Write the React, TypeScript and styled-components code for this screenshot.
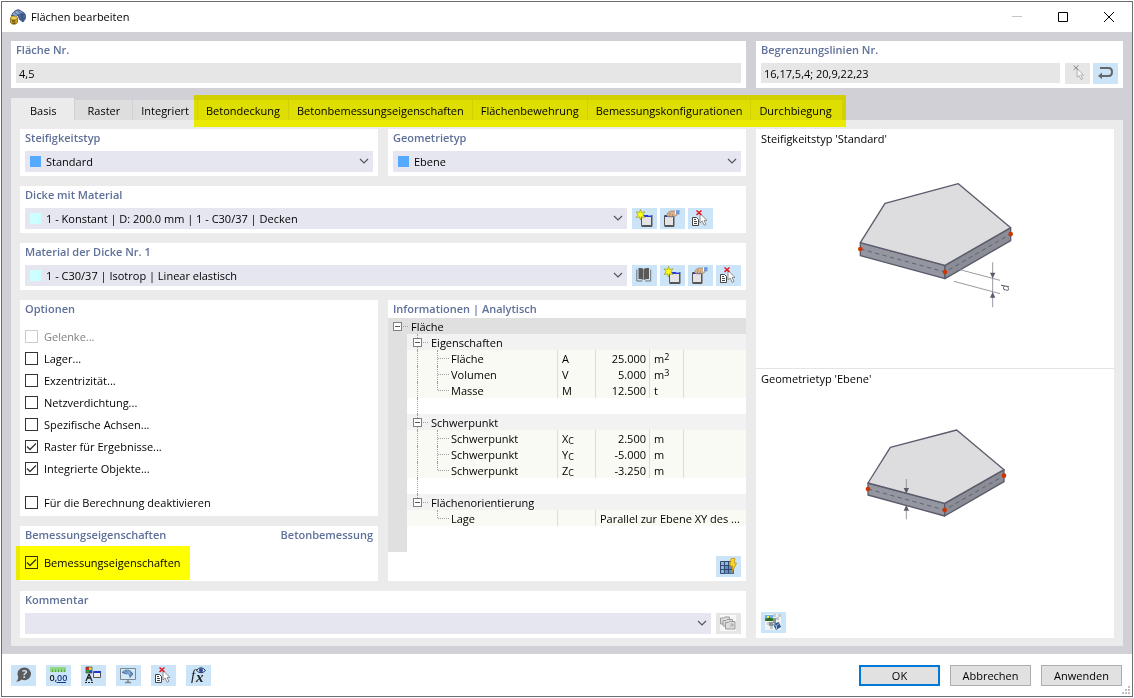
import React, { useState } from 'react';
import styled, { createGlobalStyle, css } from 'styled-components';

const GlobalStyle = createGlobalStyle`
  *, *::before, *::after { box-sizing: border-box; }
  body {
    margin: 0;
    background: #fff;
    color: #000;
    font-family: 'Open Sans', 'Noto Sans', sans-serif;
    font-size: 11px;
    line-height: 16px;
  }
  button, input, select { font: inherit; color: inherit; margin: 0; }
  svg { display: block; flex: none; }
`;

/* ---------- window frame ---------- */

const Page = styled.div`
  display: flex;
  min-height: 100vh;
  padding: 1px;
`;

const Window = styled.main`
  position: relative;
  display: flex;
  flex-direction: column;
  flex: 1;
  min-width: 0;
  border: 1px solid #6c6d70;
  background: #fff;
`;

const TitleBar = styled.header`
  display: flex;
  align-items: center;
  height: 30px;
  padding-left: 8px;
`;

const WindowTitle = styled.h1`
  flex: 1;
  margin: 0 0 0 5px;
  font-size: 11px;
  font-weight: 400;
`;

const CaptionButton = styled.button`
  display: grid;
  place-items: center;
  width: 46px;
  height: 30px;
  padding: 0;
  border: 0;
  background: none;
`;

const Body = styled.div`
  display: flex;
  flex-direction: column;
  flex: 1;
  padding: 9px 9px 8px;
  background: #d1d0d6;
`;

const Header = styled.div`
  display: grid;
  grid-template-columns: minmax(0, 1fr) 367px;
  gap: 10px;
  margin-bottom: 10px;
`;

/* ---------- tabs ---------- */

const TabBar = styled.div`
  display: flex;
  align-items: flex-end;
  height: 22px;
`;

const HighlightedTabs = styled.div`
  position: relative;
  display: flex;
  &::after {
    content: '';
    position: absolute;
    inset: -5px -4px -7px -3px;
    background: #ff0;
    mix-blend-mode: multiply;
    pointer-events: none;
  }
`;

const Tab = styled.button<{ $active?: boolean }>`
  height: 20px;
  padding: 1px 8px 0;
  border: 0;
  border-left: 1px solid #d1d0d6;
  background: #dedede;
  white-space: nowrap;
  line-height: 20px;
  &:last-child { padding-right: 10px; }
  ${p => p.$active && css`
    height: 22px;
    padding: 3px 18px 0;
    background: #ebebeb;
    border-color: #ebebeb;
  `}
`;

const WideTab = styled(Tab)`
  padding: 1px 12px 0;
`;

const TabPage = styled.div`
  display: grid;
  grid-template-columns: minmax(0, 1fr) 358px;
  gap: 10px;
  flex: 1;
  padding: 9px 9px 8px;
  background: #ebebeb;
`;

/* ---------- panels ---------- */

const Column = styled.div`
  display: flex;
  flex-direction: column;
  gap: 10px;
  min-width: 0;
`;

const Split = styled.div<{ $grow?: boolean }>`
  display: grid;
  grid-template-columns: minmax(0, 1fr) minmax(0, 1fr);
  gap: 10px;
  flex: ${p => (p.$grow ? 1 : 'none')};
`;

const Panel = styled.section<{ $grow?: boolean }>`
  display: flex;
  flex-direction: column;
  flex: ${p => (p.$grow ? 1 : 'none')};
  min-width: 0;
  padding: 0 5px 4px;
  background: #fff;
`;

const OptionPanel = styled(Panel)`
  min-height: 55px;
  padding-bottom: 2px;
`;

const PanelTitle = styled.h2`
  display: flex;
  justify-content: space-between;
  height: 22px;
  margin: 0;
  padding-top: 1px;
  color: #5f7099;
  font-size: 11px;
  font-weight: 600;
`;

const FieldRow = styled.div`
  display: flex;
  gap: 5px;
`;

const TextField = styled.input`
  flex: 1;
  min-width: 0;
  height: 20px;
  padding: 0 3px;
  border: 0;
  background: #e6e6e6;
`;

const Buttons = styled.div<{ $slots?: number }>`
  display: flex;
  gap: 3px;
  ${p => p.$slots && css`width: ${p.$slots * 28 - 3}px;`}
`;

const IconButton = styled.button`
  width: 25px;
  height: 21px;
  padding: 0;
  border: 0;
  background: #cce4f7;
  &:disabled { background: #e6e6e6; }
`;

/* ---------- drop-down ---------- */

const SelectBox = styled.div`
  position: relative;
  flex: 1;
  min-width: 0;
`;

const NativeSelect = styled.select`
  display: block;
  appearance: none;
  width: 100%;
  height: 21px;
  padding: 1px 24px 0 21px;
  border: 0;
  border-radius: 0;
  background: #e6e6f1;
`;

const Swatch = styled.span<{ $color: string }>`
  position: absolute;
  left: 5px;
  top: 5px;
  width: 11px;
  height: 11px;
  background: ${p => p.$color};
  pointer-events: none;
`;

const ChevronSlot = styled.span`
  position: absolute;
  right: 4px;
  top: 7px;
  pointer-events: none;
`;

/* ---------- options ---------- */

const OptionList = styled.div`
  display: flex;
  flex-direction: column;
  align-items: flex-start;
  padding-top: 4px;
`;

const Spacer = styled.div`
  height: 12px;
`;

const Option = styled.label<{ $marked?: boolean; $disabled?: boolean }>`
  position: relative;
  display: flex;
  align-items: center;
  gap: 6px;
  height: 22px;
  color: ${p => (p.$disabled ? '#808080' : '#000')};
  ${p => p.$marked && css`
    &::after {
      content: '';
      position: absolute;
      inset: -6px -9px;
      background: #ff0;
      mix-blend-mode: multiply;
      pointer-events: none;
    }
  `}
`;

const CheckFrame = styled.span`
  position: relative;
  width: 13px;
  height: 13px;
  margin-bottom: 1px;
  svg { position: absolute; left: 0; top: 0; pointer-events: none; }
`;

const Check = styled.input`
  display: block;
  appearance: none;
  width: 13px;
  height: 13px;
  border: 1px solid #333;
  background: #fff;
  &:disabled { border-color: #ccc; }
`;

/* ---------- information tree ---------- */

const InfoPanel = styled(Panel)`
  padding: 0;
`;

const InfoTitle = styled(PanelTitle)`
  height: 18px;
  padding-left: 5px;
`;

const InfoFooter = styled.div`
  display: flex;
  flex: 1;
  align-items: flex-end;
  justify-content: flex-end;
  padding: 4px 5px;
`;

const Tree = styled.table`
  width: 100%;
  table-layout: fixed;
  border-spacing: 0;
  td { height: 16px; padding: 0; line-height: 16px; white-space: nowrap; }
`;

const Gutter = styled.td`
  background: #e0e0e0;
`;

const Rest = styled.td`
  && { height: 26px; }
`;

const RootCell = styled.td`
  background: #e0e0e0;
`;

const GroupCell = styled.td`
  background: #f2f2f2;
`;

const RootLabel = styled.div`
  display: flex;
  align-items: flex-start;
  height: 16px;
  padding-left: 5px;
  line-height: 18px;
`;

const NodeLabel = styled(RootLabel)<{ $last?: boolean }>`
  position: relative;
  padding-left: 6px;
  &::before {
    content: '';
    position: absolute;
    left: 10px;
    top: 0;
    height: ${p => (p.$last ? 4 : 16)}px;
    border-left: 1px dotted #a0a0a0;
  }
`;

const Dash = styled.span`
  width: 5px;
  margin: 8px 3px 0 1px;
  border-top: 1px dotted #a0a0a0;
`;

const Toggle = styled.button`
  position: relative;
  && { margin-top: 4px; }
  width: 9px;
  height: 9px;
  padding: 0;
  border: 1px solid #808080;
  background: #fff;
  &::after {
    content: '';
    position: absolute;
    left: 1px;
    right: 1px;
    top: 3px;
    border-top: 1px solid #555;
  }
`;

const SpacerCell = styled.td`
  div {
    height: 16px;
    margin-left: 10px;
    border-left: 1px dotted #a0a0a0;
  }
`;

const LeafCell = styled.td`
  background: #f9faf4;
`;

const LeafLabel = styled.div<{ $end?: boolean; $trunk?: boolean }>`
  position: relative;
  height: 16px;
  margin-left: 10px;
  padding-left: 33px;
  border-left: 1px dotted ${p => (p.$trunk ? '#a0a0a0' : 'transparent')};
  line-height: 18px;
  &::before {
    content: '';
    position: absolute;
    left: 19px;
    top: 0;
    height: ${p => (p.$end ? 8 : 16)}px;
    border-left: 1px dotted #a0a0a0;
  }
  &::after {
    content: '';
    position: absolute;
    left: 20px;
    top: 8px;
    width: 11px;
    border-top: 1px dotted #a0a0a0;
  }
`;

const DataCell = styled.td<{ $right?: boolean }>`
  && { padding: 0 3px 0 4px; }
  border-left: 1px solid #dcdcdc;
  background: #f9faf4;
  text-align: ${p => (p.$right ? 'right' : 'left')};
`;

const Value = styled.div`
  height: 16px;
  line-height: 18px;
  sub, sup { font-size: 9px; line-height: 0; }
  sub { vertical-align: -1px; }
  sup { vertical-align: 3px; }
`;

/* ---------- preview ---------- */

const Preview = styled.aside`
  display: flex;
  flex-direction: column;
  min-width: 0;
  background: #fff;
`;

const PreviewPart = styled.figure<{ $grow?: boolean }>`
  display: flex;
  flex-direction: column;
  flex: ${p => (p.$grow ? 1 : 'none')};
  align-items: center;
  gap: ${p => (p.$grow ? 13 : 23)}px;
  min-height: 240px;
  margin: 0;
  padding: 2px 5px 5px;
  border-bottom: ${p => (p.$grow ? 0 : 1)}px solid #e4e4e8;
`;

const Caption = styled.figcaption`
  align-self: stretch;
`;

const PreviewTool = styled.div`
  display: flex;
  flex: 1;
  align-items: flex-end;
  align-self: stretch;
`;

/* ---------- footer ---------- */

const Footer = styled.footer`
  display: flex;
  align-items: center;
  justify-content: space-between;
  height: 42px;
  padding: 0 10px 0 9px;
`;

const FooterGroup = styled.div`
  display: flex;
  gap: 10px;
`;

const PushButton = styled.button<{ $primary?: boolean }>`
  width: 81px;
  height: 21px;
  padding: 1px 0 0;
  border: ${p => (p.$primary ? '2px solid #0078d7' : '1px solid #adadad')};
  background: #e1e1e1;
  line-height: 16px;
`;

const Grip = styled.span`
  position: absolute;
  right: 1px;
  bottom: 1px;
`;

/* ---------- drawings ---------- */

const Icon = ({ children }: { children: React.ReactNode }) => (
  <svg width="25" height="21" viewBox="0 0 25 21" aria-hidden="true">{children}</svg>
);

const Chevron = () => (
  <svg width="10" height="7" viewBox="0 0 10 7" aria-hidden="true">
    <path d="M1 1l4 4 4-4" fill="none" stroke="#555" strokeWidth="1.2" />
  </svg>
);

const AppIcon = () => (
  <svg width="16" height="16" viewBox="0 0 16 16" aria-hidden="true">
    <path d="M1.500 7C2.500 3.500 5 .8 9 .8l5 3c1.800 1.500 1.800 4 1.200 6.200L13 13l-3.500-2.500L8 6.500z" fill="#4c6c9e" stroke="#33496f" strokeWidth=".8" />
    <path d="M2.500 5.500C4 2.500 6.500 1.300 9.200 1.500L13 4C10 4 7.500 5 6.500 7.500z" fill="#8ba8cf" />
    <path d="M4.500 3.500l5 3.500M7.500 1.500L12 5.500M10 8l4-2.500M10.500 10.500l4.500-2M12 4.500l1 8" stroke="#2e4772" strokeWidth=".7" />
    <path d="M.5 9v4c0 3 7 3 7 0V9z" fill="#d2a41e" stroke="#75590d" strokeWidth=".7" />
    <ellipse cx="4" cy="9" rx="3.500" ry="2" fill="#f0d050" stroke="#8c6d12" strokeWidth=".7" />
    <path d="M5.500 11.500h-3v1.500h2.500v1.500H2.500" fill="none" stroke="#5d480c" strokeWidth=".8" />
  </svg>
);

const NewIcon = () => (
  <Icon>
    <path d="M9.500 7.500h10v10h-10z" fill="#e4e4e4" stroke="#555" />
    <path d="M20 7v11.500H9.500" fill="none" stroke="#555" />
    <path d="M10 7h9v2h-9z" fill="#2438e0" />
    <path d="M16 7.500h3" stroke="#8b98ff" />
    <path d="M8.500 1.500l1 3 3.500-.7L10.800 6.500 13 9.500l-3.500-.7-1 3.200-1-3.200L4 9.500l2.200-3L4 3.800l3.500.7z" fill="#ffff14" stroke="#8a8a20" strokeWidth=".6" />
  </Icon>
);

const EditIcon = () => (
  <Icon>
    <path d="M4.500 7.500h9v10h-9z" fill="#e4e4e4" stroke="#555" />
    <path d="M14 7v11.500H4.500" fill="none" stroke="#555" />
    <path d="M5 7h8v2H5z" fill="#2438e0" />
    <path d="M6.500 7.500L8 4.500 11 3h4l2 1v3l-3 2-1.500-1L11 9.500 10 8 8.500 9z" fill="#dcb48c" stroke="#8d6e52" strokeWidth=".6" />
    <path d="M9 8l1.500-3M11.500 8.500L13 6" stroke="#8d6e52" strokeWidth=".6" />
    <path d="M15.500 2.500L19.500 2v4.500L16 6z" fill="#6c98da" />
    <path d="M15.500 2.500V6.500" stroke="#fff" />
  </Icon>
);

const DeleteIcon = () => (
  <Icon>
    <path d="M4.500 9.500h4l2 2v6h-6z" fill="#fff" stroke="#454545" />
    <path d="M6 11.500h2M6 13.500h3M6 15.500h3" stroke="#454545" />
    <path d="M12 5.500v9.500l2.200-2 2 4.300 1.800-.9-2-4h3z" fill="#fff" stroke="#777" strokeWidth=".8" />
    <path d="M8.500 2.500l5 4.500m0-4.500l-5 4.500" stroke="#e8141c" strokeWidth="1.500" />
  </Icon>
);

const PickIcon = () => (
  <Icon>
    <path d="M12 5.500v8.700l2-1.700 2 4 1.700-.8-1.900-3.700h2.700z" fill="#f6f6f6" stroke="#aaa" strokeWidth=".9" />
    <path d="M8.500 2.500l5 4.500m0-4.500l-5 4.500" stroke="#888" />
  </Icon>
);

const ReturnIcon = () => (
  <Icon>
    <path d="M7 5h8.500c2.300 0 3.500 1.500 3.500 4s-1.200 4-3.500 4H8" fill="none" stroke="#666" strokeWidth="2" />
    <path d="M5 13l4-3.500v6.500z" fill="#666" />
  </Icon>
);

const BookIcon = () => (
  <Icon>
    <path d="M6.500 3C9 2.800 10.500 3.200 11.500 4v11c-1-.8-2.500-1-5-1zM17 3c-2.500-.2-4 .2-5 1v11c1-.8 2.500-1 5-1z" fill="#595959" />
    <path d="M4.800 4.500V16h5.500M18.700 4.500V16h-5.500" fill="none" stroke="#707070" />
  </Icon>
);

const MeshIcon = () => (
  <Icon>
    <path d="M4.500 5.500h13V17.500h-13z" fill="#8fb7df" stroke="#33496f" />
    <path d="M9 10h8.500v7.500H9z" fill="#5f8dc3" />
    <path d="M8.500 5.500v12M12.500 5.500v12M4.500 9.500h13M4.500 13.500h13" stroke="#33496f" />
    <path d="M15 2.500h4l-1 4.500h2.500l-4.500 9.500.8-6.500H14z" fill="#fad72e" stroke="#c79208" strokeWidth=".8" />
  </Icon>
);

const CopyIcon = () => (
  <Icon>
    <path d="M4 2h16v16H4z" fill="#f8f8f8" />
    <g fill="#ddd" stroke="#9b9b9b">
      <path d="M4.500 5h3l1-1h5v7h-9z" />
      <path d="M7 7.500h3l1-1h5.500V13H7z" />
      <path d="M9.500 9.500h3l1-1H19V16H9.500z" />
    </g>
    <path d="M14 14l3-3h-2.500m2.500 0v2.500" fill="none" stroke="#999" strokeWidth=".8" />
  </Icon>
);

const RenderIcon = () => (
  <Icon>
    <path d="M4 2h16v16H4z" fill="#f1f3f3" />
    <path d="M12 2h3v3h-3zM15 5h3v3h-3zM6 10h3v3H6zM9 14h3v3H9zM17 2h3v3h-3z" fill="#c4cccc" />
    <path d="M4 3h8v6H4z" fill="#3f8e30" />
    <path d="M4 3h8v3H4z" fill="#68b0e6" />
    <path d="M5 8l3-3 4 3v1H4z" fill="#28651f" />
    <path d="M6 4h2v2H6z" fill="#ffe043" />
    <path d="M12 6h3v5h-3zM8 10h4v4H8z" fill="#8c9296" />
    <path d="M12 12l6-2 2 5-5 3z" fill="#31588d" />
    <path d="M12.500 12.500l3 1 3.500-2.500M15.500 14v3" fill="none" stroke="#a3c4ea" />
  </Icon>
);

const HelpIcon = () => (
  <Icon>
    <path d="M13.500 2.500a6.500 6.300 0 1 1-2.800 12C9 16 7 16.700 5 16.700c1.500-1.200 2.300-3 2.200-5A6.400 6.400 0 0 1 13.500 2.500z" fill="#5c5c5c" />
    <text x="13.500" y="13" fill="#cce4f7" fontSize="11" fontWeight="700" textAnchor="middle">?</text>
  </Icon>
);

const UnitsIcon = () => (
  <Icon>
    <path d="M4 2h16v5H4z" fill="#92d884" />
    <path d="M6.500 4.500V7M9.500 4.500V7M12.500 4.500V7M15.500 4.500V7M18.500 4.500V7" stroke="#4e9c42" strokeWidth=".8" />
    <text x="3.500" y="16" fontSize="9" fontWeight="600" fill="#111">0,<tspan fill="#123a86">00</tspan></text>
    <path d="M10.500 17.500H20" stroke="#123a86" />
  </Icon>
);

const DisplayIcon = () => (
  <Icon>
    <path d="M5 2h3v3H5z" fill="#ed1c24" />
    <path d="M8 2h3v3H8z" fill="#efe51b" />
    <path d="M5 5h3v3H5z" fill="#27a83b" />
    <path d="M8 5h3v3H8z" fill="#2651d8" />
    <path d="M5 2h6v6H5z" fill="none" stroke="#454545" strokeWidth=".7" />
    <path d="M8 9l-3 7M8 9l3 7M6 13h4" fill="none" stroke="#222" strokeWidth="1.300" />
    <path d="M4 17.500h2M7 17.500h2M10 17.500h2" stroke="#222" />
    <path d="M12.500 6.500h7v6h-7z" fill="#ececec" stroke="#555" />
    <path d="M13 6h7v2h-7z" fill="#2438c8" />
  </Icon>
);

const ScreenIcon = () => (
  <Icon>
    <path d="M4.500 3.500h15v11h-15z" fill="#d3e8f8" stroke="#7c8790" />
    <path d="M12 14.500V17M9 17.500h6" stroke="#7c8790" strokeWidth="1.500" />
    <path d="M6 7.500C9 4 14 4 17 9l-3 3.500C13.500 9.500 12 8 10.500 9z" fill="#5e88ba" stroke="#395a85" strokeWidth=".6" />
    <path d="M8 6l4 2.500M11 5l3.500 5M14 6l-1.500 4" stroke="#b2cdec" strokeWidth=".6" />
  </Icon>
);

const FormulaIcon = () => (
  <Icon>
    <text x="5" y="15" fontFamily="'Liberation Serif', serif" fontStyle="italic" fontSize="15" fill="#222">f</text>
    <text x="10" y="17" fontFamily="'Liberation Serif', serif" fontStyle="italic" fontWeight="700" fontSize="15" fill="#222">x</text>
    <path d="M10.500 5.500Q15 0 19.500 5.500 15 10 10.500 5.500z" fill="#dce7f5" stroke="#222f55" />
    <circle cx="15" cy="5.300" r="2" fill="#2b4f9c" />
  </Icon>
);

const Tip = ({ x, y, up }: { x: number; y: number; up?: boolean }) => (
  <path d={up ? `M${x} ${y}l8 17h-16z` : `M${x} ${y}l8-17h-16z`} fill="#5b5b6b" />
);

const StandardDrawing = () => (
  <svg width="190" height="150" viewBox="0 0 570 450" aria-hidden="true">
    <g stroke="#5b5b6b" strokeWidth="4" strokeLinejoin="round">
      <path d="M61 218L315 286V326L61 257z" fill="#9496a0" />
      <path d="M315 286L512 173V212L315 326z" fill="#8a8c96" />
      <path d="M61 218L135 100 355 41 512 173 315 286z" fill="#dddde0" />
    </g>
    <path d="M61 237L315 306 512 192" fill="none" stroke="#555866" strokeWidth="2.500" strokeDasharray="13 10" />
    <path d="M345 295L480 331M342 334L480 371M458 277V412" stroke="#85858f" strokeWidth="2.500" />
    <Tip x={458} y={325} />
    <Tip x={458} y={366} up />
    <g fill="#cf3400"><circle cx="61" cy="237" r="7" /><circle cx="315" cy="306" r="7" /><circle cx="512" cy="192" r="7" /></g>
    <text transform="translate(506 363) rotate(-90)" fontFamily="'Liberation Sans', sans-serif" fontStyle="italic" fontSize="32" fill="#5b5b6b">d</text>
  </svg>
);

const PlaneDrawing = () => (
  <svg width="190" height="130" viewBox="0 0 570 390" aria-hidden="true">
    <g stroke="#5b5b6b" strokeWidth="4" strokeLinejoin="round">
      <path d="M84 249L314 310V348L84 285z" fill="#9496a0" />
      <path d="M314 310L492 209V245L314 348z" fill="#8a8c96" />
      <path d="M84 249L151 142 350 90 492 209 314 310z" fill="#dddde0" />
    </g>
    <path d="M84 267L314 330 492 227" fill="none" stroke="#555866" strokeWidth="2.500" strokeDasharray="13 10" />
    <path d="M199 237V278M199 318V358" stroke="#85858f" strokeWidth="2.500" />
    <Tip x={199} y={281} />
    <Tip x={199} y={315} up />
    <g fill="#cf3400"><circle cx="84" cy="267" r="7" /><circle cx="314" cy="330" r="7" /><circle cx="492" cy="227" r="7" /></g>
  </svg>
);

/* ---------- composed controls ---------- */

const Combo = ({ id, value, color }: { id: string; value: string; color?: string }) => (
  <SelectBox>
    <NativeSelect id={id} defaultValue={value} aria-labelledby={`${id}-title`}>
      <option>{value}</option>
    </NativeSelect>
    {color && <Swatch $color={color} />}
    <ChevronSlot><Chevron /></ChevronSlot>
  </SelectBox>
);

const Titled = ({ id, children }: { id: string; children: string }) => (
  <PanelTitle><label id={`${id}-title`} htmlFor={id}>{children}</label></PanelTitle>
);

const CheckOption = ({ text, checked = false, disabled, marked }: {
  text: string; checked?: boolean; disabled?: boolean; marked?: boolean;
}) => {
  const [on, setOn] = useState(checked);
  return (
    <Option $disabled={disabled} $marked={marked}>
      <CheckFrame>
        <Check type="checkbox" checked={on} disabled={disabled} onChange={() => setOn(!on)} />
        {on && (
          <svg width="13" height="13" viewBox="0 0 13 13" aria-hidden="true">
            <path d="M2 6.500l3 3 6-6" fill="none" stroke="#333" strokeWidth="1.300" />
          </svg>
        )}
      </CheckFrame>
      {text}
    </Option>
  );
};

const GroupRow = ({ name, last }: { name: string; last?: boolean }) => (
  <tr>
    <Gutter />
    <GroupCell colSpan={5}>
      <NodeLabel $last={last}><Toggle aria-label={`${name} einklappen`} /><Dash />{name}</NodeLabel>
    </GroupCell>
  </tr>
);

const SpacerRow = () => (
  <tr><Gutter /><SpacerCell colSpan={5}><div /></SpacerCell></tr>
);

const ValueRow = ({ name, symbol, value, unit, end }: {
  name: string; symbol: React.ReactNode; value: string; unit: React.ReactNode; end?: boolean;
}) => (
  <tr>
    <Gutter />
    <LeafCell><LeafLabel $trunk $end={end}>{name}</LeafLabel></LeafCell>
    <DataCell><Value>{symbol}</Value></DataCell>
    <DataCell $right><Value>{value}</Value></DataCell>
    <DataCell><Value>{unit}</Value></DataCell>
    <DataCell />
  </tr>
);

const InfoTree = () => (
  <Tree>
    <colgroup>
      <col style={{ width: 19 }} /><col style={{ width: 150 }} /><col style={{ width: 38 }} />
      <col style={{ width: 54 }} /><col style={{ width: 34 }} /><col />
    </colgroup>
    <tbody>
      <tr>
        <RootCell colSpan={6}>
          <RootLabel><Toggle aria-label="Fläche einklappen" /><Dash />Fläche</RootLabel>
        </RootCell>
      </tr>
      <GroupRow name="Eigenschaften" />
      <ValueRow name="Fläche" symbol="A" value="25.000" unit={<>m<sup>2</sup></>} />
      <ValueRow name="Volumen" symbol="V" value="5.000" unit={<>m<sup>3</sup></>} />
      <ValueRow name="Masse" symbol="M" value="12.500" unit="t" end />
      <SpacerRow />
      <GroupRow name="Schwerpunkt" />
      <ValueRow name="Schwerpunkt" symbol={<>X<sub>C</sub></>} value="2.500" unit="m" />
      <ValueRow name="Schwerpunkt" symbol={<>Y<sub>C</sub></>} value="-5.000" unit="m" />
      <ValueRow name="Schwerpunkt" symbol={<>Z<sub>C</sub></>} value="-3.250" unit="m" end />
      <SpacerRow />
      <GroupRow name="Flächenorientierung" last />
      <tr>
        <Gutter />
        <LeafCell><LeafLabel $end>Lage</LeafLabel></LeafCell>
        <DataCell />
        <DataCell colSpan={3}><Value>Parallel zur Ebene XY des ...</Value></DataCell>
      </tr>
      <tr><Gutter /><Rest colSpan={5} /></tr>
    </tbody>
  </Tree>
);

export default function App() {
  return (
    <>
      <GlobalStyle />
      <Page>
        <Window>
          <TitleBar>
            <AppIcon />
            <WindowTitle>Flächen bearbeiten</WindowTitle>
            <CaptionButton aria-label="Minimieren" disabled>
              <svg width="10" height="10"><path d="M0 4.500h10" stroke="#c4c4c4" /></svg>
            </CaptionButton>
            <CaptionButton aria-label="Maximieren">
              <svg width="10" height="10"><path d="M.5 .5h9v9h-9z" fill="none" stroke="#000" /></svg>
            </CaptionButton>
            <CaptionButton aria-label="Schließen">
              <svg width="10" height="10"><path d="M0 0l10 10M10 0L0 10" stroke="#000" /></svg>
            </CaptionButton>
          </TitleBar>

          <Body>
            <Header>
              <Panel>
                <Titled id="surface">Fläche Nr.</Titled>
                <FieldRow><TextField id="surface" defaultValue="4,5" readOnly /></FieldRow>
              </Panel>
              <Panel>
                <Titled id="lines">Begrenzungslinien Nr.</Titled>
                <FieldRow>
                  <TextField id="lines" defaultValue="16,17,5,4; 20,9,22,23" readOnly />
                  <Buttons>
                    <IconButton aria-label="Auswählen" disabled><PickIcon /></IconButton>
                    <IconButton aria-label="Umkehren"><ReturnIcon /></IconButton>
                  </Buttons>
                </FieldRow>
              </Panel>
            </Header>

            <TabBar>
              <Tab $active>Basis</Tab>
              <WideTab>Raster</WideTab>
              <Tab>Integriert</Tab>
              <HighlightedTabs>
                <Tab>Betondeckung</Tab>
                <Tab>Betonbemessungseigenschaften</Tab>
                <Tab>Flächenbewehrung</Tab>
                <Tab>Bemessungskonfigurationen</Tab>
                <Tab>Durchbiegung</Tab>
              </HighlightedTabs>
            </TabBar>

            <TabPage>
              <Column>
                <Split>
                  <Panel>
                    <Titled id="stiffness">Steifigkeitstyp</Titled>
                    <FieldRow><Combo id="stiffness" value="Standard" color="#55aaff" /></FieldRow>
                  </Panel>
                  <Panel>
                    <Titled id="geometry">Geometrietyp</Titled>
                    <FieldRow><Combo id="geometry" value="Ebene" color="#55aaff" /></FieldRow>
                  </Panel>
                </Split>

                <Panel>
                  <Titled id="thickness">Dicke mit Material</Titled>
                  <FieldRow>
                    <Combo id="thickness" value="1 - Konstant | D: 200.0 mm | 1 - C30/37 | Decken" color="#ccffff" />
                    <Buttons $slots={4}>
                      <IconButton aria-label="Neu"><NewIcon /></IconButton>
                      <IconButton aria-label="Bearbeiten"><EditIcon /></IconButton>
                      <IconButton aria-label="Löschen"><DeleteIcon /></IconButton>
                    </Buttons>
                  </FieldRow>
                </Panel>

                <Panel>
                  <Titled id="material">Material der Dicke Nr. 1</Titled>
                  <FieldRow>
                    <Combo id="material" value="1 - C30/37 | Isotrop | Linear elastisch" color="#ccffff" />
                    <Buttons $slots={4}>
                      <IconButton aria-label="Bibliothek"><BookIcon /></IconButton>
                      <IconButton aria-label="Neu"><NewIcon /></IconButton>
                      <IconButton aria-label="Bearbeiten"><EditIcon /></IconButton>
                      <IconButton aria-label="Löschen"><DeleteIcon /></IconButton>
                    </Buttons>
                  </FieldRow>
                </Panel>

                <Split $grow>
                  <Column>
                    <OptionPanel $grow>
                      <PanelTitle>Optionen</PanelTitle>
                      <OptionList>
                        <CheckOption text="Gelenke..." disabled />
                        <CheckOption text="Lager..." />
                        <CheckOption text="Exzentrizität..." />
                        <CheckOption text="Netzverdichtung..." />
                        <CheckOption text="Spezifische Achsen..." />
                        <CheckOption text="Raster für Ergebnisse..." checked />
                        <CheckOption text="Integrierte Objekte..." checked />
                        <Spacer />
                        <CheckOption text="Für die Berechnung deaktivieren" />
                      </OptionList>
                    </OptionPanel>
                    <OptionPanel>
                      <PanelTitle><span>Bemessungseigenschaften</span><span>Betonbemessung</span></PanelTitle>
                      <OptionList>
                        <CheckOption text="Bemessungseigenschaften" checked marked />
                      </OptionList>
                    </OptionPanel>
                  </Column>

                  <InfoPanel>
                    <InfoTitle>Informationen | Analytisch</InfoTitle>
                    <InfoTree />
                    <InfoFooter>
                      <IconButton aria-label="Neu berechnen"><MeshIcon /></IconButton>
                    </InfoFooter>
                  </InfoPanel>
                </Split>

                <Panel>
                  <Titled id="comment">Kommentar</Titled>
                  <FieldRow>
                    <Combo id="comment" value="" />
                    <IconButton aria-label="Kommentare übernehmen" disabled><CopyIcon /></IconButton>
                  </FieldRow>
                </Panel>
              </Column>

              <Preview>
                <PreviewPart>
                  <Caption>Steifigkeitstyp 'Standard'</Caption>
                  <StandardDrawing />
                </PreviewPart>
                <PreviewPart $grow>
                  <Caption>Geometrietyp 'Ebene'</Caption>
                  <PlaneDrawing />
                  <PreviewTool>
                    <IconButton aria-label="Darstellung"><RenderIcon /></IconButton>
                  </PreviewTool>
                </PreviewPart>
              </Preview>
            </TabPage>
          </Body>

          <Footer>
            <FooterGroup>
              <IconButton aria-label="Hilfe"><HelpIcon /></IconButton>
              <IconButton aria-label="Einheiten"><UnitsIcon /></IconButton>
              <IconButton aria-label="Anzeige"><DisplayIcon /></IconButton>
              <IconButton aria-label="Ansicht"><ScreenIcon /></IconButton>
              <IconButton aria-label="Löschen"><DeleteIcon /></IconButton>
              <IconButton aria-label="Formel"><FormulaIcon /></IconButton>
            </FooterGroup>
            <FooterGroup>
              <PushButton $primary>OK</PushButton>
              <PushButton>Abbrechen</PushButton>
              <PushButton>Anwenden</PushButton>
            </FooterGroup>
          </Footer>
          <Grip>
            <svg width="10" height="10" viewBox="0 0 10 10" aria-hidden="true">
              <path d="M7 1h2v2H7zM4 4h2v2H4zM7 4h2v2H7zM1 7h2v2H1zM4 7h2v2H4zM7 7h2v2H7z" fill="#bfbfbf" />
            </svg>
          </Grip>
        </Window>
      </Page>
    </>
  );
}
